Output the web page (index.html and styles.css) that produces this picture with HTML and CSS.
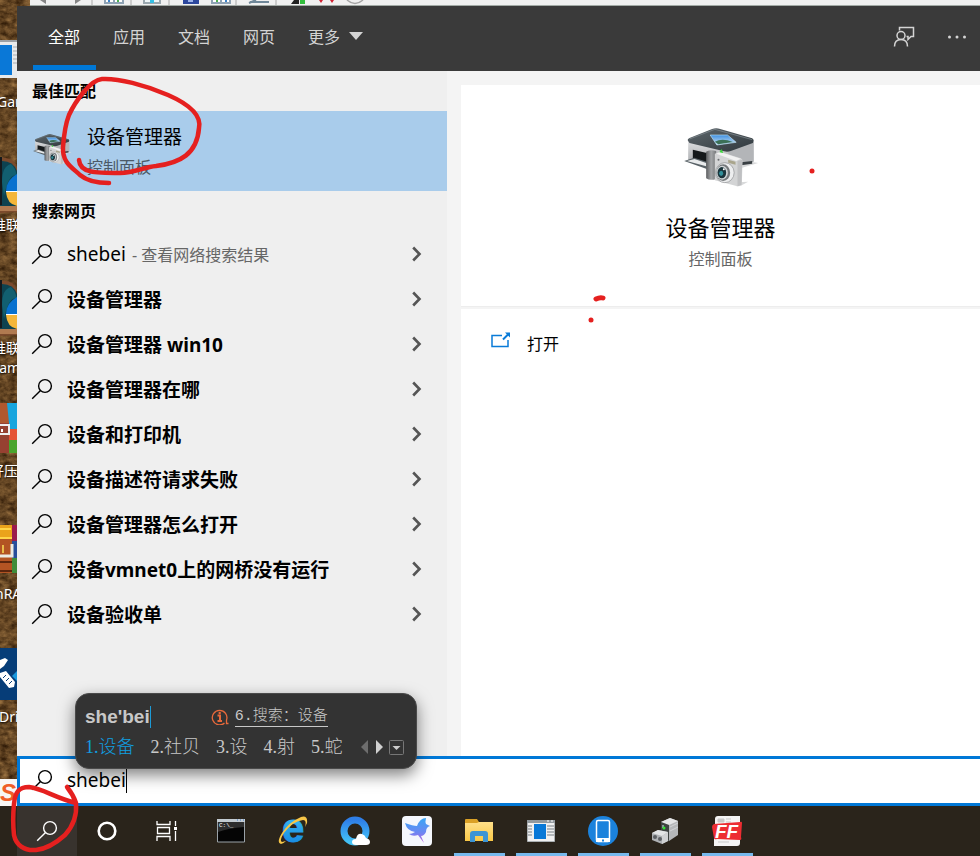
FILE: index.html
```html
<!DOCTYPE html>
<html lang="zh-CN">
<head>
<meta charset="utf-8">
<title>搜索</title>
<link rel="stylesheet" href="styles.css">
</head>
<body>
<svg class="defs" aria-hidden="true">
  <defs>
    <linearGradient id="lid" x1="0" y1="0" x2="1" y2="1"><stop offset="0" stop-color="#5d666b"/><stop offset="1" stop-color="#30383d"/></linearGradient>
    <linearGradient id="side" x1="0" y1="0" x2="0" y2="1"><stop offset="0" stop-color="#dcdddf"/><stop offset="1" stop-color="#a5a7aa"/></linearGradient>
    <linearGradient id="grip" x1="0" x2="1"><stop offset="0" stop-color="#5b5d5f"/><stop offset=".5" stop-color="#a4a6a8"/><stop offset="1" stop-color="#77797b"/></linearGradient>
    <linearGradient id="sky" x1="0" y1="0" x2="0" y2="1"><stop offset="0" stop-color="#3f8fe0"/><stop offset="1" stop-color="#cfe6f5"/></linearGradient>
    <linearGradient id="qring" x1="0" y1="0" x2="0" y2="1"><stop offset="0" stop-color="#2f7fe8"/><stop offset="1" stop-color="#43c2f7"/></linearGradient>
    <linearGradient id="bird" x1="0" y1="0" x2="0" y2="1"><stop offset="0" stop-color="#38a6f5"/><stop offset=".6" stop-color="#6f86f2"/><stop offset="1" stop-color="#c05be0"/></linearGradient>
    <linearGradient id="eblue" x1="0" y1="0" x2="0" y2="1"><stop offset="0" stop-color="#46cbf5"/><stop offset="1" stop-color="#0f80e0"/></linearGradient>
    <linearGradient id="folder" x1="0" y1="0" x2="0" y2="1"><stop offset="0" stop-color="#ffe08a"/><stop offset="1" stop-color="#f9c846"/></linearGradient>
    <filter id="earth" x="0" y="0" width="1" height="1" color-interpolation-filters="sRGB">
      <feTurbulence type="fractalNoise" baseFrequency=".12 .18" numOctaves="4" seed="4"/>
      <feColorMatrix values=".55 0 0 0 .12  .45 0 0 0 .05  .30 0 0 0 -.01  0 0 0 0 1"/>
    </filter>
    <symbol id="devices" viewBox="70 80 230 180">
      <path d="M210 194 285 186 298 188 250 202zM240 246 268 244 246 256z" fill="#d9dadb"/>
      <path d="M88 122 210 152 210 198 88 180z" fill="url(#side)"/>
      <path d="M208 152 285 124 285 184 208 198z" fill="#b3b5b8"/>
      <path d="M208 190 280 182 280 190 208 200z" fill="#393f43"/>
      <path d="M102 148 144 158 144 190 102 176z" fill="#15191b"/>
      <path d="M76 182 106 172 144 184 144 206z" fill="#596267"/>
      <path d="M84 182 107 176 142 188 142 198z" fill="#e9ebec"/>
      <path d="M88 122Q84 118 92 113L160 86Q172 82 184 86L280 114Q288 119 282 128L216 152Q206 156 196 153L92 128z" fill="url(#lid)"/>
      <path d="M92 116 168 87 280 118" fill="none" stroke="#869095" stroke-width="2"/>
      <path d="M154 104 206 104 232 126 174 134z" fill="url(#sky)" stroke="#b9dff3" stroke-width="2"/>
      <path d="M168 124Q190 112 222 125L178 132z" fill="#3b7057"/>
      <path d="M142 154Q152 146 172 152L172 236Q154 242 142 234z" fill="url(#grip)"/>
      <path d="M168 160 184 154 246 174Q251 176 251 182L249 254Q240 260 230 256L168 240z" fill="#d3d4d5"/>
      <path d="M172 160 184 155 246 175 232 182z" fill="#f2f2f2"/>
      <path d="M236 182 250 178 248 253 236 258z" fill="#bfc0c2"/>
      <path d="m208 178 22 6v9l-22-6z" fill="#a9a58c"/>
      <circle cx="179" cy="178" r="3" fill="#6d7073"/>
      <ellipse cx="198" cy="217" rx="28" ry="30" fill="#edeeef" stroke="#8b8d8f" stroke-width="2"/>
      <ellipse cx="193" cy="217" rx="21" ry="25" fill="#75797c"/>
      <ellipse cx="190" cy="217" rx="17" ry="21" fill="#d1d5d7"/>
      <ellipse cx="189" cy="217" rx="13" ry="17" fill="#1b353c"/>
      <ellipse cx="187" cy="219" rx="6" ry="8" fill="#31909b"/>
      <circle cx="195" cy="207" r="3" fill="#fff"/>
      <path d="m182 156 6-10 5 12z" fill="#39d43b"/>
    </symbol>
    <symbol id="magnifier" viewBox="0 0 22 22">
      <circle cx="14" cy="8" r="6.4" fill="none" stroke="currentColor" stroke-width="1.4"/>
      <path d="M9.5 12.5 1.2 20.8" fill="none" stroke="currentColor" stroke-width="1.4"/>
    </symbol>
    <symbol id="chevron" viewBox="0 0 10 16">
      <path d="M1.2 1.500 7.500 8 1.2 14.500" fill="none" stroke="currentColor" stroke-width="2.600"/>
    </symbol>
    <symbol id="game" viewBox="0 0 17 62">
      <path d="M0 6Q14 4 17 16V60L0 61z" fill="#7b4a2c"/>
      <path d="M0 9Q13 8 17 19V54H0z" fill="#0d4250"/>
      <path d="M2 30Q2 14 11 12 15 15 17 24 9 20 4 44z" fill="#125f70"/>
      <path d="M0 5h2v48H0z" fill="#15191d"/>
      <path d="M17 22Q6 28 6 39H17z" fill="#0871cf"/>
      <path d="M6 40H17V54Q7 52 6 40z" fill="#f4b63a"/>
      <path d="M6 39.500h11" stroke="#fff"/>
      <path d="M0 54h17v5H0z" fill="#b07a50"/>
    </symbol>
  </defs>
</svg>

<div class="screen">
  <div class="workspace">
    <svg class="wallpaper" aria-hidden="true"><rect width="100%" height="100%" filter="url(#earth)"/></svg>
    <aside class="desktop" aria-label="桌面">
      <svg class="shortcut shortcut-window" viewBox="0 0 17 38"><path d="M0 0h17v38H0z" fill="#e8eaeb"/><path d="M0 0h17v2H0z" fill="#9ba0a5"/><path d="M0 5h12v30H0z" fill="#0a78d7"/><path d="M13 7h4M13 11h4M13 15h4M13 19h4M13 23h4" stroke="#a8adb1"/></svg>
      <span class="label label-gam">Gam</span>
      <svg class="shortcut shortcut-game-a"><use href="#game"/></svg>
      <span class="label label-league-a">推联</span>
      <svg class="shortcut shortcut-game-b"><use href="#game"/></svg>
      <span class="label label-league-b">推联</span>
      <span class="label label-game">Gam</span>
      <svg class="shortcut shortcut-zip" viewBox="0 0 17 50"><path d="M0 0h17v26H0z" fill="#18a5de"/><path d="M0 26h17v11H0z" fill="#e55335"/><path d="M0 37h17v13H0z" fill="#49a42d"/><path d="M0 0h7l2 20v30H0z" fill="#b0582e"/><path d="M0 20h9v30H0z" fill="#964131"/><path d="M0 22h9v9H0" fill="none" stroke="#eee" stroke-width="2"/><path d="M2 26v3" stroke="#fff" stroke-width="2"/></svg>
      <span class="label label-zip">好压</span>
      <svg class="shortcut shortcut-rar" viewBox="0 0 17 49"><path d="M0 0h12v16H0z" fill="#eaa31b"/><path d="M12 0h5v16h-5z" fill="#9b1b4d"/><path d="M0 16h17v17H0z" fill="#284e9b"/><path d="M0 33h17v15H0z" fill="#3f8c3a"/><path d="M0 4h11M0 13h12" stroke="#ffd547" stroke-width="2"/><path d="M0 14h12v34H0z" fill="#b35423"/><path d="M0 37h12M0 46h12" stroke="#5b260e" stroke-width="2"/><path d="M0 31h12V19" fill="none" stroke="#ecebe3" stroke-width="3"/><path d="M3 20v8" stroke="#e9bc49" stroke-width="2"/></svg>
      <span class="label label-rar">nRA</span>
      <svg class="shortcut shortcut-driver" viewBox="0 0 17 52"><path d="M0 0h17v52H0z" fill="#063d78"/><path d="M0 12 5 10 8 12 4 18 0 21zM0 25 6 23 15 34 14 39 9 40 0 29z" fill="#fff"/><path d="m3 30 3-3M6 33l3-3M9 36l3-3" stroke="#063d78"/><path d="m12 28 5-5v10z" fill="#1997dd"/></svg>
      <span class="label label-driver">Dri</span>
      <svg class="shortcut shortcut-sogou" viewBox="0 0 17 27"><path d="M0 0h17v27H0z" fill="#f8f7f5"/><text x="0" y="22" class="sogou-mark">S</text></svg>
    </aside>

    <div class="front">
      <div class="toolbar" aria-hidden="true">
        <svg class="toolbar-icons" viewBox="0 0 370 5">
          <path d="M10 0 16 4V0zM45 4 51 0H45z" fill="#858585"/>
          <path d="M62 0v5M101 0v5M139 0v5M206 0v5M246 0v5" stroke="#a8a8a8"/>
          <path d="M74 0h20v4H74z" fill="#8ea2b4"/><path d="M76 0h7v2h-7zM85 0h7v2h-7z" fill="#fff"/><path d="M78 0h2v2h-2z" fill="#3b82c9"/><path d="M87 0h2v2h-2z" fill="#4caf50"/>
          <path d="M113 0h18v4h-18z" fill="#9aa7ae"/><path d="M115 0h14v2h-14z" fill="#eef6f8"/><path d="M120 0h4v3h-4z" fill="#35bfe4"/>
          <path d="M153 0h16v4h-16z" fill="#2c479d"/><path d="M158 0h5v2h-5z" fill="#9eb4ea"/>
          <path d="M181 0h20v4h-20z" fill="#8ea2b4"/><path d="M183 0h7v2h-7zM192 0h7v2h-7z" fill="#fff"/><path d="M186 0h2v2h-2z" fill="#4caf50"/><path d="M195 0h2v2h-2z" fill="#3b82c9"/>
          <path d="M219 3 226 0M220 2h19" stroke="#6f8798" stroke-width="2"/>
          <path d="m261 4 3-4h5v4z" fill="#222"/><path d="M270 0h5v4h-5z" fill="#31bd3c"/>
          <path d="M289 0h4l-2 3zM300 0h4l-2 3z" fill="#cf2232"/>
          <path d="M317 0Q325 7 333 0" fill="none" stroke="#a5a5a5" stroke-width="1.500"/>
        </svg>
      </div>

      <main class="search-window">
        <header class="header">
          <nav class="tabs">
            <button class="tab tab-active" type="button">全部</button>
            <button class="tab" type="button">应用</button>
            <button class="tab" type="button">文档</button>
            <button class="tab" type="button">网页</button>
            <button class="tab tab-more" type="button">更多<svg class="caret-down" viewBox="0 0 14 8"><path d="M0 0h14L7 8z" fill="currentColor"/></svg></button>
          </nav>
          <div class="header-actions">
            <button class="icon-button" type="button" aria-label="反馈"><svg class="feedback-icon" viewBox="0 0 22 22"><g fill="none" stroke="currentColor" stroke-width="1.500"><circle cx="8" cy="9.500" r="4"/><path d="M1.500 20.500Q1.500 13.500 8 13.500T14.500 20.500M6.500 4.500V1.500H20.500V10.500H18L15 13.500V10.500H13.500"/></g></svg></button>
            <button class="icon-button" type="button" aria-label="选项"><svg class="dots-icon" viewBox="0 0 20 4"><circle cx="2.500" cy="2" r="1.500"/><circle cx="10" cy="2" r="1.500"/><circle cx="17.500" cy="2" r="1.500"/></svg></button>
          </div>
        </header>

        <div class="content">
          <section class="results">
            <h2 class="group-title">最佳匹配</h2>
            <a class="best-match" href="#detail">
              <svg class="best-icon"><use href="#devices"/></svg>
              <span class="best-text"><span class="best-name">设备管理器</span><span class="best-kind">控制面板</span></span>
            </a>
            <h2 class="group-title">搜索网页</h2>
            <ul class="suggestions">
              <li><a class="suggestion" href="#s1"><svg class="glass"><use href="#magnifier"/></svg><span class="query query-typed">shebei</span><span class="hint">- 查看网络搜索结果</span><svg class="arrow"><use href="#chevron"/></svg></a></li>
              <li><a class="suggestion" href="#s2"><svg class="glass"><use href="#magnifier"/></svg><span class="query">设备管理器</span><svg class="arrow"><use href="#chevron"/></svg></a></li>
              <li><a class="suggestion" href="#s3"><svg class="glass"><use href="#magnifier"/></svg><span class="query">设备管理器 win10</span><svg class="arrow"><use href="#chevron"/></svg></a></li>
              <li><a class="suggestion" href="#s4"><svg class="glass"><use href="#magnifier"/></svg><span class="query">设备管理器在哪</span><svg class="arrow"><use href="#chevron"/></svg></a></li>
              <li><a class="suggestion" href="#s5"><svg class="glass"><use href="#magnifier"/></svg><span class="query">设备和打印机</span><svg class="arrow"><use href="#chevron"/></svg></a></li>
              <li><a class="suggestion" href="#s6"><svg class="glass"><use href="#magnifier"/></svg><span class="query">设备描述符请求失败</span><svg class="arrow"><use href="#chevron"/></svg></a></li>
              <li><a class="suggestion" href="#s7"><svg class="glass"><use href="#magnifier"/></svg><span class="query">设备管理器怎么打开</span><svg class="arrow"><use href="#chevron"/></svg></a></li>
              <li><a class="suggestion" href="#s8"><svg class="glass"><use href="#magnifier"/></svg><span class="query">设备vmnet0上的网桥没有运行</span><svg class="arrow"><use href="#chevron"/></svg></a></li>
              <li><a class="suggestion" href="#s9"><svg class="glass"><use href="#magnifier"/></svg><span class="query">设备验收单</span><svg class="arrow"><use href="#chevron"/></svg></a></li>
            </ul>
          </section>

          <section class="detail" id="detail">
            <div class="summary">
              <svg class="summary-icon"><use href="#devices"/></svg>
              <h1 class="summary-name">设备管理器</h1>
              <p class="summary-kind">控制面板</p>
            </div>
            <div class="actions">
              <a class="action" href="#open"><svg class="open-icon" viewBox="0 0 20 16"><g fill="none" stroke="#0a7bd8" stroke-width="1.500"><path d="M11 3.500H1V14.500H17V8"/><path d="M12 7.500 18 1.500" stroke-width="2"/></g><path d="M14 .5h5v5z" fill="#0a7bd8"/></svg>打开</a>
            </div>
          </section>
        </div>

        <label class="search-box">
          <svg class="glass"><use href="#magnifier"/></svg>
          <span class="search-field"><input class="search-input" type="text" value="shebei" aria-label="搜索"><span class="text-caret"></span></span>
        </label>
      </main>
    </div>
  </div>

  <footer class="taskbar">
    <div class="system-buttons">
      <button class="system-button system-search" type="button" aria-label="搜索"><svg class="glass"><use href="#magnifier"/></svg></button>
      <button class="system-button" type="button" aria-label="Cortana"><svg width="20" height="20" viewBox="0 0 20 20"><circle cx="10" cy="10" r="8.300" fill="none" stroke="#fff" stroke-width="2.600"/></svg></button>
      <button class="system-button" type="button" aria-label="任务视图"><svg width="22" height="20" viewBox="0 0 22 20"><g fill="none" stroke="#fff" stroke-width="1.300"><path d="M1 0V3.500H14V0M1 20V15.500H14V20M1.500 6.500H13.500V12.500H1.500zM19.500 0V5M19.500 10V20"/></g><path d="M18 6h3v3h-3z" fill="#fff"/></svg></button>
    </div>
    <div class="apps">
      <button class="app" type="button" aria-label="命令提示符"><svg width="28" height="24" viewBox="0 0 28 24"><path d="M.5 1h27v22H.5z" fill="#050505" stroke="#9aa2a8"/><path d="M0 0h28v3H0z" fill="#c3cbd1"/><path d="M20 1h1M23 1h1M26 1h1" stroke="#3b76c6"/><path d="M1 13Q12 9 27 8V3H1z" fill="#2d2d2d"/><text x="2" y="8" class="prompt-text">C:\_</text></svg></button>
      <button class="app" type="button" aria-label="Internet Explorer"><svg width="32" height="30" viewBox="0 0 32 30"><text x="5" y="26" class="ie-mark">e</text><path d="M4 28Q-1 27 5 17 12 6 24 1 31-1 30 7L28 11Q30 4 26 4 16 5 7 17 2 25 5 26L9 25Q6 28 4 28z" fill="#f7c648"/></svg></button>
      <button class="app" type="button" aria-label="QQ浏览器"><svg width="30" height="30" viewBox="0 0 30 30"><circle cx="15" cy="15" r="11" fill="none" stroke="url(#qring)" stroke-width="7"/><path d="M16 29Q12 29 12 26 12 23 16 23 17 17 22 18 25 19 26 22 30 23 30 26 30 29 26 29z" fill="#fff"/></svg></button>
      <button class="app" type="button" aria-label="迅雷"><svg width="30" height="30" viewBox="0 0 30 30"><rect width="30" height="30" rx="4" fill="#f5f7fc"/><path d="M3 7Q11 10 15 10 18 2 24 2 23 6 24 8L28 10Q24 11 24 16 22 20 19 20L22 27 16 19Q11 21 7 18 10 18 13 16 5 15 3 7z" fill="url(#bird)"/></svg></button>
      <button class="app app-running" type="button" aria-label="文件资源管理器"><svg width="28" height="24" viewBox="0 0 28 24"><path d="M0 1Q0 0 1 0H12L14 3H27V6H0z" fill="#dba126"/><path d="M0 4H12L14 3H28V22H0z" fill="url(#folder)"/><path d="M5 23V15Q5 12 8 12H20Q23 12 23 15V23H18V17H10V23z" fill="#3c94d4"/></svg></button>
      <button class="app app-running" type="button" aria-label="应用程序"><svg width="28" height="22" viewBox="0 0 28 22"><path d="M.5.5h27v21H.5z" fill="#f0f0f0" stroke="#abb0b3"/><path d="M0 0h28v3H0z" fill="#92999e"/><path d="M20 1h2M24 1h2" stroke="#fff"/><path d="M7 4h12v15H7z" fill="#0878d7"/><path d="M1 6h4M1 9h4M1 12h4M1 15h4M20 6h7M20 9h7M20 12h7M20 15h7" stroke="#777e83"/></svg></button>
      <button class="app app-running" type="button" aria-label="手机助手"><svg width="30" height="30" viewBox="0 0 30 30"><circle cx="15" cy="15" r="15" fill="#1b82dc"/><rect x="8.500" y="4.500" width="13" height="21" rx="1.500" fill="#1b82dc" stroke="#fff" stroke-width="1.500"/><path d="M8 22h14v4H8z" fill="#fff"/><path d="M14 23.500h2v2h-2z" fill="#1b82dc"/></svg></button>
      <button class="app app-running" type="button" aria-label="设备管理器"><svg width="28" height="28" viewBox="0 0 28 28"><path d="M10 5 19 1 27 4V18L18 24 10 20z" fill="#b5b7b9"/><path d="m10 5 9-4 8 3-9 4z" fill="#e4e5e6"/><path d="M10 5 18 8V24L10 20z" fill="#3d4241"/><path d="M12 8v3" stroke="#899" stroke-width="2"/><circle cx="13" cy="11" r="1.500" fill="#30e331"/><path d="m1 16 6-3 10 2v9l-6 3-10-4z" fill="#aeb1b4"/><path d="m1 16 6-3 10 2-6 4z" fill="#e2e4e5"/><path d="m11 19 6-4v9l-6 3z" fill="#cfd1d3"/><circle cx="4" cy="20" r="2" fill="#5b5f63"/><circle cx="9" cy="22" r="2" fill="#5b5f63"/><path d="m19 10 8-4M19 14l8-4" stroke="#d2d4d6"/></svg></button>
      <button class="app app-running" type="button" aria-label="FormatFactory"><svg width="30" height="30" viewBox="0 0 30 30"><path d="M3 3Q3 0 6 0H28V27Q28 30 25 30H2V23L3 20z" fill="#f4f4f4"/><path d="M6 3h6v3H6zM14 3h5M14 6h5M6 26h11" fill="#c9c9c9" stroke="#c9c9c9"/><path d="M2 8Q0 9 0 11L2 22Q2 24 5 23L28 24Q30 24 29 21L30 7Q30 5 28 6z" fill="#ed2d32"/><text x="3" y="22" class="ff-mark">FF</text></svg></button>
    </div>
  </footer>

  <div class="ime">
    <div class="ime-top">
      <span class="ime-pinyin">she'bei</span>
      <svg class="ime-info" viewBox="0 0 18 16"><path d="M13.500 14A7.300 7.300 0 1 1 15.500 11V14.500H17.500" fill="none" stroke="#e8693b" stroke-width="1.300"/><path d="M6.500 6.500H9V12M6.500 12H11" fill="none" stroke="#e8693b" stroke-width="2"/><circle cx="8.700" cy="4" r="1.200" fill="#e8693b"/></svg>
      <a class="ime-search" href="#search">6.搜索：设备</a>
    </div>
    <ol class="candidates">
      <li class="candidate candidate-active">1.设备</li>
      <li class="candidate">2.社贝</li>
      <li class="candidate">3.设</li>
      <li class="candidate">4.射</li>
      <li class="candidate">5.蛇</li>
      <li class="pager">
        <button class="pager-button" type="button" aria-label="上一页"><svg width="8" height="14" viewBox="0 0 8 14"><path d="M7 0V14L0 7z" fill="#6d6d6d"/></svg></button>
        <button class="pager-button" type="button" aria-label="下一页"><svg width="8" height="14" viewBox="0 0 8 14"><path d="M1 0V14L8 7z" fill="#d0d0d0"/></svg></button>
        <button class="pager-button" type="button" aria-label="展开"><svg width="15" height="15" viewBox="0 0 15 15"><rect x=".5" y=".5" width="14" height="14" rx="1" fill="none" stroke="#777"/><path d="M3.500 6H11.500L7.500 10z" fill="#ccc"/></svg></button>
      </li>
    </ol>
  </div>

  <svg class="ink" aria-hidden="true">
    <g fill="none" stroke="#e5201f" stroke-width="4.500" stroke-linecap="round" stroke-linejoin="round">
      <path d="M79 160C80 173 95 173 120 173C135 173 144 167 156 166C180 163 197 154 199 128C202 113 184 102 168 95C145 85 118 78 102 79C90 80 75 102 69 115C65 125 64 134 63 147C62 163 73 168 80 175C87 181 96 183 109 183"/>
      <path d="M67 787C71 792 74 797 76 803C77 814 74 825 65 835C55 844 46 849 36 850C24 851 16 845 14 835C13 826 13 814 14 804C15 792 19 787 29 787C44 789 53 797 76 803"/>
      <path d="M596 299Q600 297 603 298" stroke-width="5"/>
    </g>
    <circle cx="812" cy="171" r="2.500" fill="#e5201f"/>
    <circle cx="591" cy="320" r="2.500" fill="#e5201f"/>
  </svg>
</div>
</body>
</html>
```
FILE: styles.css
```css
* { box-sizing: border-box; }

body {
  margin: 0;
  font-family: "Noto Sans", "Noto Sans CJK SC", sans-serif;
  font-size: 16px;
  color: #000;
}

button {
  padding: 0;
  border: 0;
  background: none;
  color: inherit;
  font: inherit;
}

a { color: inherit; text-decoration: none; }
h1, h2, p, ul, ol { margin: 0; padding: 0; }
ul, ol { list-style: none; }
svg { display: block; flex: none; }
.defs { position: absolute; width: 0; height: 0; }

.screen {
  position: relative;
  display: flex;
  flex-direction: column;
  min-height: 100vh;
  overflow: hidden;
}

.workspace { position: relative; display: flex; flex: 1; background: #5f4424; }
.wallpaper { position: absolute; top: 0; left: 0; width: 32px; height: 100%; }

.front { position: relative; display: flex; flex: 1; flex-direction: column; min-width: 0; }

/* Desktop icons peeking out beside the window */
.desktop { position: relative; width: 17px; overflow: hidden; }
.shortcut { position: absolute; left: 0; width: 17px; }
.shortcut-window { top: 40px; height: 38px; }
.shortcut-game-a { top: 152px; height: 62px; }
.shortcut-game-b { top: 275px; height: 62px; }
.shortcut-zip { top: 403px; height: 50px; }
.shortcut-rar { top: 525px; height: 49px; }
.shortcut-driver { top: 648px; height: 52px; }
.shortcut-sogou { top: 779px; height: 27px; }

.label {
  position: absolute;
  left: -8px;
  color: #fff;
  font-size: 14px;
  line-height: 20px;
  white-space: nowrap;
  text-shadow: 1px 1px 2px #000;
}
.label-gam { top: 92px; left: -3px; }
.label-league-a { top: 215px; }
.label-league-b { top: 338px; }
.label-game { top: 358px; left: -11px; }
.label-zip { top: 461px; left: -10px; }
.label-rar { top: 584px; left: -5px; }
.label-driver { top: 707px; left: -1px; }
.sogou-mark { fill: #ef5f28; font: italic bold 24px "Liberation Sans", sans-serif; }

.toolbar {
  height: 6px;
  margin-left: 13px;
  background: #f0f0f0;
  border-bottom: 1px solid #a2aaa5;
}
.toolbar-icons { width: 370px; height: 5px; }

/* Search window */
.search-window { display: flex; flex: 1; flex-direction: column; }

.header {
  display: flex;
  justify-content: space-between;
  height: 65px;
  padding: 0 13px 1px 16px;
  background: #3a3a3a;
  color: #d4d4d4;
}
.tabs { display: flex; gap: 2px; }
.tab {
  display: flex;
  align-items: center;
  padding: 0 16px 0 15px;
  border-bottom: 5px solid transparent;
}
.tab-active { border-bottom-color: #0078d7; color: #fff; }
.caret-down { width: 14px; height: 8px; margin-left: 9px; }
.header-actions { display: flex; align-items: center; gap: 32px; padding-bottom: 2px; }
.icon-button { display: flex; }
.feedback-icon { width: 22px; height: 22px; }
.dots-icon { width: 20px; height: 4px; fill: currentColor; }

.content { display: flex; flex: 1; background: #f4f4f4; }
.results { flex: 0 0 430px; background: #efefef; }

.group-title {
  padding-left: 15px;
  font-size: 16px;
  font-weight: 700;
  line-height: 40px;
}

.best-match {
  display: flex;
  gap: 15px;
  height: 80px;
  padding: 10px 15px;
  background: #a9cceb;
}
.best-icon { width: 40px; height: 32px; margin-top: 12px; }
.best-text { display: flex; flex-direction: column; }
.best-name { font-size: 19px; line-height: 32px; }
.best-kind { color: #4b5a68; line-height: 28px; }

.suggestion {
  display: flex;
  align-items: center;
  height: 45px;
  padding: 0 25px 0 14px;
}
.glass { width: 22px; height: 22px; }
.query { margin-left: 14px; font-size: 19px; font-weight: 700; }
.query-typed { font-weight: 400; }
.hint { margin-left: 6px; color: #666; }
.arrow { width: 10px; height: 16px; margin-left: auto; color: #555; }

.detail { display: flex; flex: 1; flex-direction: column; padding: 14px 0 0 14px; }
.summary {
  display: flex;
  flex-direction: column;
  align-items: center;
  height: 222px;
  padding-top: 42px;
  background: #fff;
  border-bottom: 1px solid #ededed;
}
.summary-icon { width: 77px; height: 60px; }
.summary-name { margin-top: 24px; font-size: 22px; font-weight: 400; line-height: 32px; }
.summary-kind { color: #666; line-height: 32px; }
.actions { flex: 1; margin-top: 2px; padding: 23px 30px; background: #fff; }
.action { display: flex; gap: 16px; line-height: 24px; }
.open-icon { width: 20px; height: 16px; }

.search-box {
  display: flex;
  align-items: center;
  gap: 14px;
  height: 50px;
  padding: 0 11px 2px;
  background: #fff;
  border: 3px solid #0078d7;
  border-right: 0;
}
.search-field { position: relative; flex: 1; }
.search-input {
  width: 100%;
  padding: 0;
  border: 0;
  outline: 0;
  background: none;
  font: inherit;
  font-size: 19px;
}
.text-caret { position: absolute; top: 2px; left: 59px; width: 1px; height: 24px; background: #000; }

/* Taskbar */
.taskbar { display: flex; height: 50px; padding-left: 17px; background: #2a241b; }
.system-buttons { display: flex; margin-right: 2px; }
.system-button { display: flex; align-items: center; justify-content: center; width: 60px; color: #fff; }
.system-search { background: #38332e; }
.apps { display: flex; gap: 11px; padding-left: 7px; }
.app {
  display: flex;
  align-items: center;
  justify-content: center;
  width: 51px;
  padding-right: 2px;
  border-top: 3px solid transparent;
  border-bottom: 3px solid transparent;
}
.app-running { border-bottom-color: #76b9ed; }
.prompt-text { fill: #fff; font: 6px "Liberation Mono", monospace; }
.ie-mark { fill: url(#eblue); stroke: url(#eblue); stroke-width: 1px; font: bold 40px "Liberation Sans", sans-serif; }
.ff-mark { fill: #fff; font: italic bold 19px "Liberation Sans", sans-serif; }

/* Input method panel floating over the search box */
.ime {
  position: absolute;
  bottom: 87px;
  left: 75px;
  width: 342px;
  height: 76px;
  padding: 9px 0 7px 9px;
  background: #333;
  border: 1px solid #4a4a4a;
  border-radius: 14px;
  box-shadow: 0 6px 16px rgba(0, 0, 0, 0.5);
  color: #c8c8c8;
  white-space: nowrap;
}
.ime-top { display: flex; align-items: center; height: 28px; }
.ime-pinyin {
  margin-right: 60px;
  border-right: 1px solid #1c9ad6;
  font: bold 19px/22px "Liberation Sans", sans-serif;
}
.ime-info { width: 18px; height: 16px; }
.ime-search {
  margin-left: 6px;
  border-bottom: 1px solid #c8c8c8;
  font: 300 15px/18px "Liberation Mono", "Noto Sans CJK SC", monospace;
}
.candidates {
  display: flex;
  align-items: center;
  gap: 16px;
  height: 32px;
  font: 300 18px/32px "Liberation Serif", "Noto Sans CJK SC", serif;
}
.candidate-active { color: #109ee0; }
.pager { display: flex; align-items: center; gap: 6px; margin-left: 2px; }
.pager-button { display: flex; }

.ink { position: absolute; top: 0; left: 0; width: 100%; height: 100%; pointer-events: none; }
```
